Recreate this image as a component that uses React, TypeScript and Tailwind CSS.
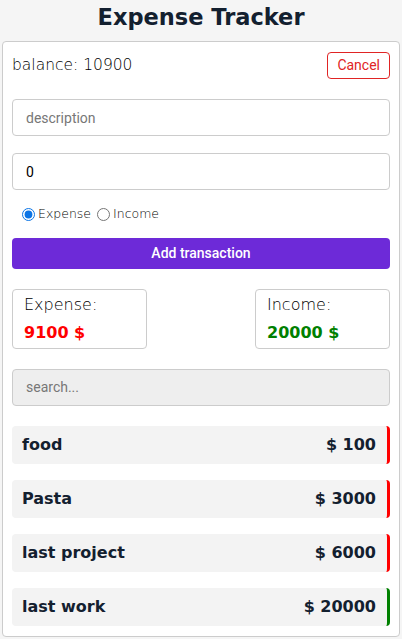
import { useState } from "react";

const items = [
  { name: "food", amount: 100, type: "expense" },
  { name: "Pasta", amount: 3000, type: "expense" },
  { name: "last project", amount: 6000, type: "expense" },
  { name: "last work", amount: 20000, type: "income" },
];

export default function App() {
  const [kind, setKind] = useState("expense");

  return (
    <div className="min-h-[639px] bg-[#f5f5f5] font-['DejaVu_Sans',sans-serif] text-[#13202f]">
      <h1 className="pt-[3px] text-center text-[22.5px] leading-[28px] font-bold">Expense Tracker</h1>

      <div className="mx-[2px] mt-[10px] rounded-[4px] border border-[#ccc] bg-white px-[9px] pt-[10px] pb-[10px]">
        <div className="flex items-center justify-between">
          <span className="text-[15.5px] font-light text-black">balance: 10900</span>
          <button className="h-[27px] rounded-[4px] border border-[#e02424] px-[9px] font-['Roboto',sans-serif] text-[14px] text-[#e02424]">
            Cancel
          </button>
        </div>

        <input
          className="mt-[20px] block h-[37px] w-full rounded-[4px] border border-[#ccc] px-[13px] font-['Roboto',sans-serif] text-[14px] placeholder:text-[#777] outline-none"
          placeholder="description"
        />
        <input
          className="mt-[17px] block h-[37px] w-full rounded-[4px] border border-[#ccc] px-[13px] font-['Roboto',sans-serif] text-[14px] text-black outline-none"
          defaultValue="0"
        />

        <div className="mt-[15px] flex items-center gap-[6px] pl-[10px] text-[12.5px] font-light text-black">
          <label className="flex items-center gap-[3px]">
            <input
              type="radio"
              name="kind"
              checked={kind === "expense"}
              onChange={() => setKind("expense")}
              className="m-0 h-[13px] w-[13px] accent-[#0b74e5]"
            />
            Expense
          </label>
          <label className="flex items-center gap-[3px]">
            <input
              type="radio"
              name="kind"
              checked={kind === "income"}
              onChange={() => setKind("income")}
              className="m-0 h-[13px] w-[13px] accent-[#0b74e5]"
            />
            Income
          </label>
        </div>

        <button className="mt-[14px] block h-[31px] w-full rounded-[4px] bg-[#6d2ad8] font-['Roboto',sans-serif] text-[14px] font-medium text-white">
          Add transaction
        </button>

        <div className="mt-[20px] flex justify-between">
          <div className="h-[60px] w-[135px] rounded-[4px] border border-[#ccc] px-[11px] pt-[3px]">
            <div className="text-[16px] font-light text-black">Expense:</div>
            <div className="mt-[4px] text-[16px] font-bold text-[#ff0000]">9100 $</div>
          </div>
          <div className="h-[60px] w-[135px] rounded-[4px] border border-[#ccc] px-[11px] pt-[3px]">
            <div className="text-[16px] font-light text-black">Income:</div>
            <div className="mt-[4px] text-[16px] font-bold text-[#008000]">20000 $</div>
          </div>
        </div>

        <input
          className="mt-[20px] block h-[37px] w-full rounded-[4px] border border-[#ccc] bg-[#eee] px-[13px] font-['Roboto',sans-serif] text-[14px] placeholder:text-[#777] outline-none"
          placeholder="search..."
        />

        <ul className="mt-[20px] flex flex-col gap-[16px]">
          {items.map((it) => (
            <li
              key={it.name}
              className={`flex h-[38px] items-center justify-between rounded-[4px] border-r-[3px] bg-[#f3f3f3] pr-[11px] pl-[10px] text-[16px] font-bold ${
                it.type === "income" ? "border-[#008000]" : "border-[#ff0000]"
              }`}
            >
              <span>{it.name}</span>
              <span>$ {it.amount}</span>
            </li>
          ))}
        </ul>
      </div>
    </div>
  );
}
